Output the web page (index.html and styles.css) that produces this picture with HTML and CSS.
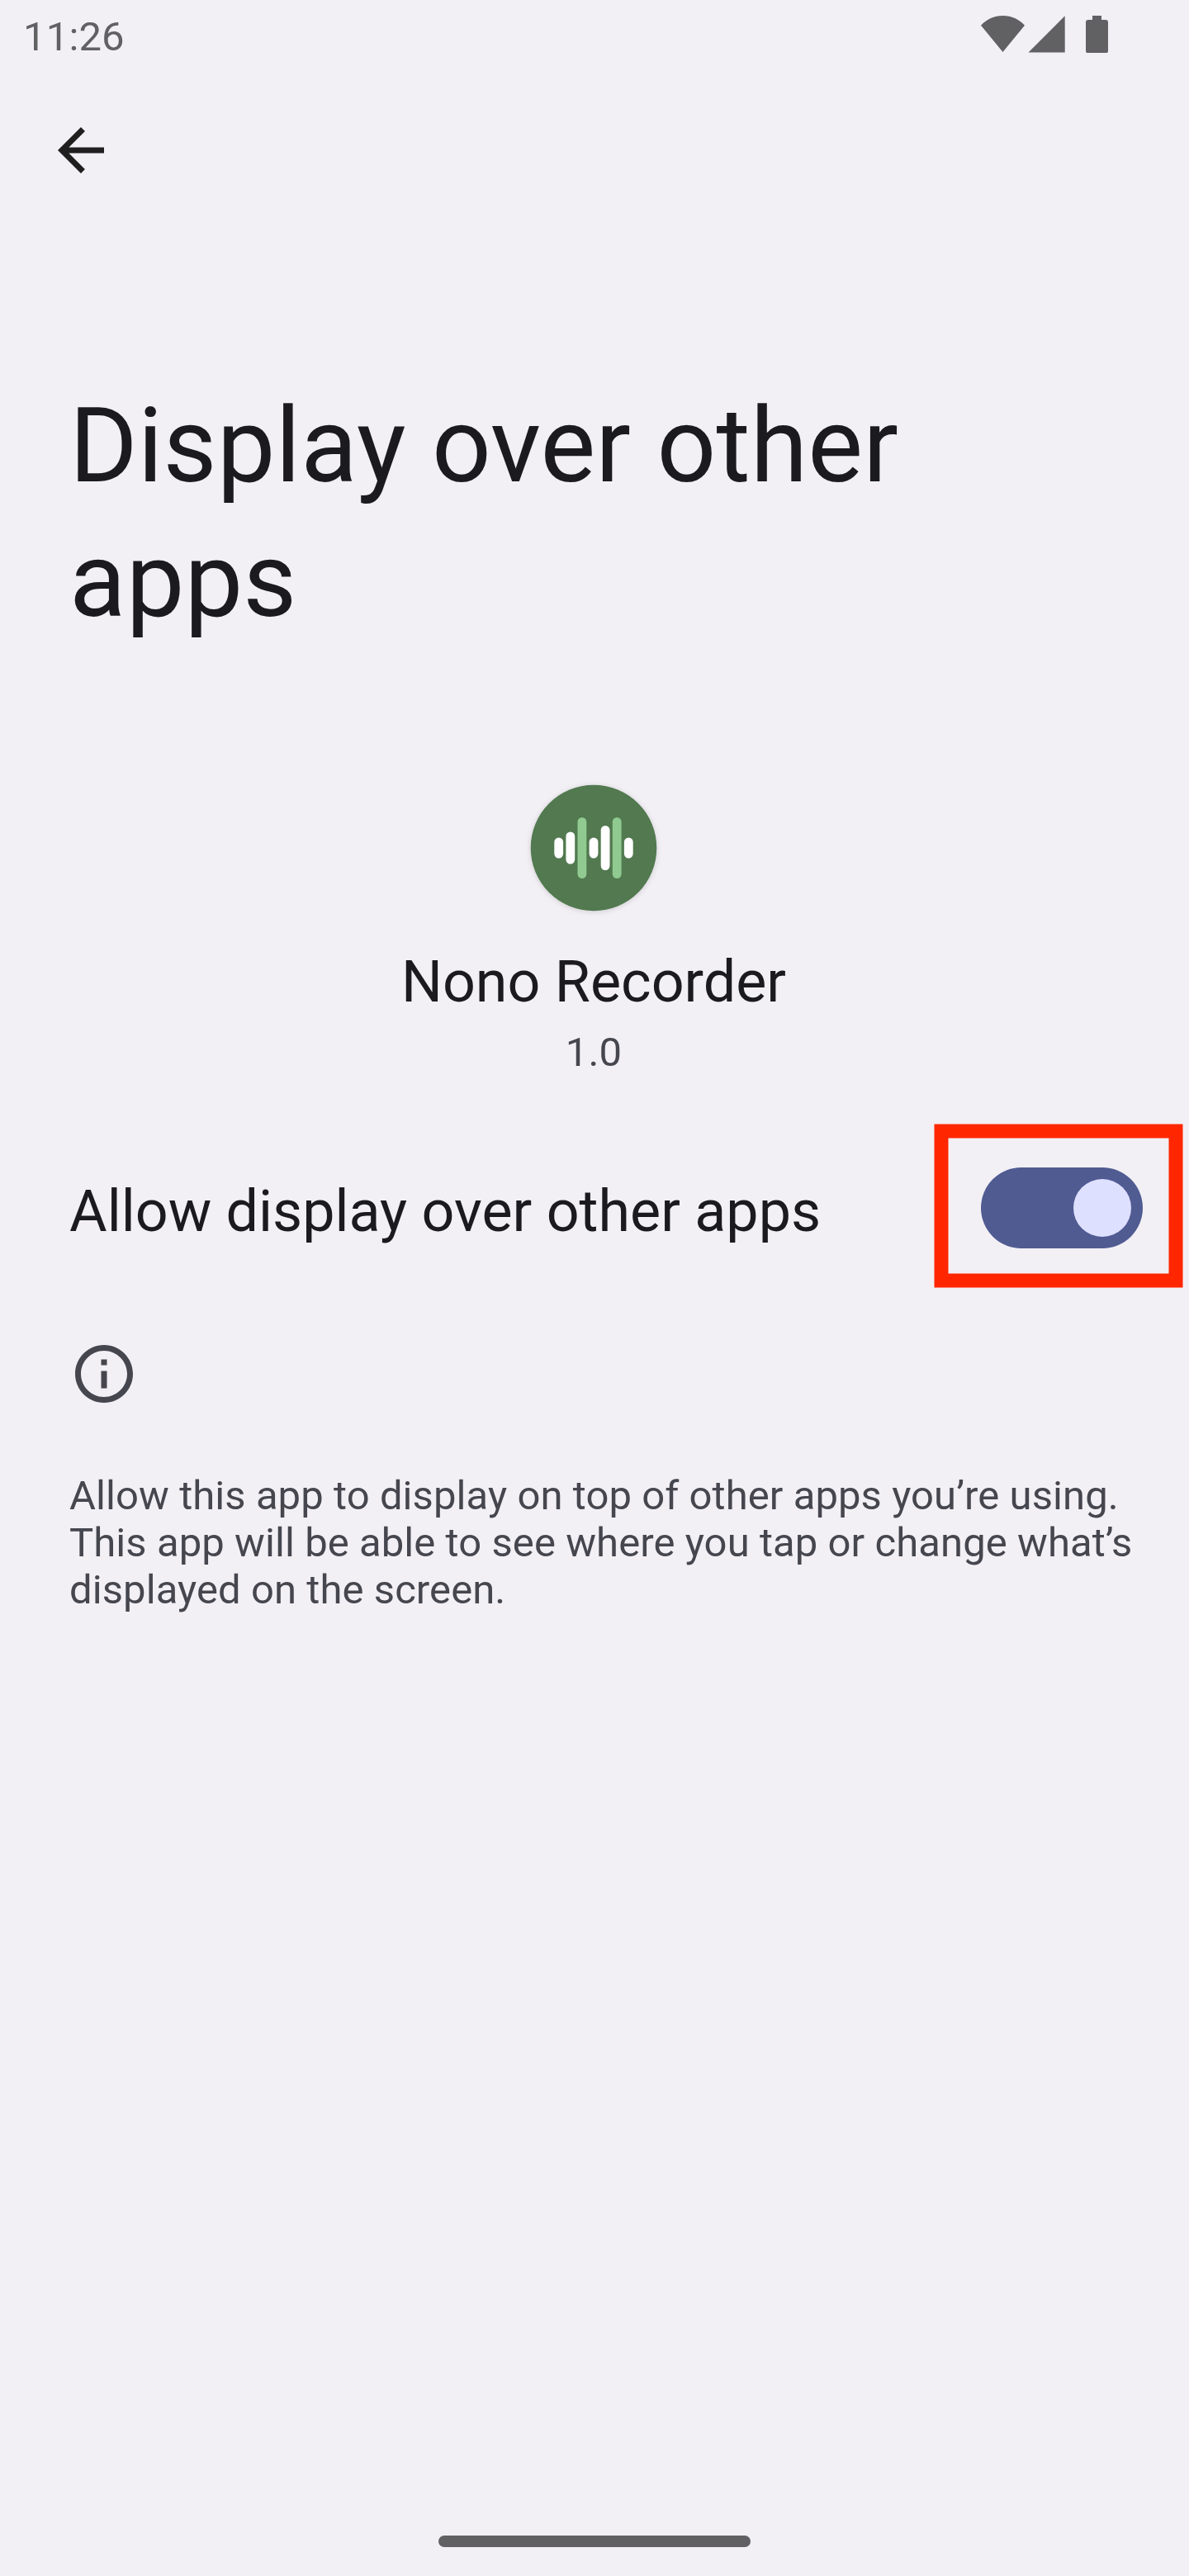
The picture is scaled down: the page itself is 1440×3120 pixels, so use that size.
FILE: index.html
```html
<!DOCTYPE html>
<html lang="en">
<head>
<meta charset="utf-8">
<title>Display over other apps</title>
<link rel="stylesheet" href="styles.css">
</head>
<body>
<div class="screen">
  <header class="status-bar">
    <span class="clock">11:26</span>
    <svg class="status-icons" viewBox="0 0 154 46" width="154" height="46" aria-hidden="true">
      <path d="M0 12.8C7 5 16 1 26.500 1S46 5 53 12.800L26.500 45Z"/>
      <path d="M57.500 45.500H101.700V1.300Z"/>
      <path d="M135 1h11v5h5a3 3 0 0 1 3 3v34.500a3 3 0 0 1-3 3h-21a3 3 0 0 1-3-3V9a3 3 0 0 1 3-3h5z"/>
    </svg>
  </header>
  <nav class="toolbar">
    <svg class="back" viewBox="0 0 24 24" width="84" height="84" aria-hidden="true"><path d="M20 11H7.830l5.590-5.590L12 4l-8 8 8 8 1.410-1.410L7.830 13H20z"/></svg>
  </nav>
  <h1 class="title">Display over other apps</h1>
  <section class="app">
    <svg class="app-icon" viewBox="0 0 154 154" width="154" height="154" aria-hidden="true">
      <circle cx="77" cy="77" r="76.300" fill="#52794f"/>
      <g fill="#fff">
        <rect x="29.300" y="64.500" width="10.800" height="25" rx="5.400"/>
        <rect x="43.400" y="57.500" width="10.800" height="39" rx="5.400"/>
        <rect x="71.600" y="64.500" width="10.800" height="25" rx="5.400"/>
        <rect x="85.700" y="50" width="10.800" height="54" rx="5.400"/>
        <rect x="113.900" y="64.500" width="10.800" height="25" rx="5.400"/>
      </g>
      <g fill="#90ca90">
        <rect x="57.500" y="40" width="10.800" height="74" rx="5.400"/>
        <rect x="99.800" y="40" width="10.800" height="74" rx="5.400"/>
      </g>
    </svg>
    <div class="app-name">Nono Recorder</div>
    <div class="app-version">1.0</div>
  </section>
  <section class="setting">
    <span class="setting-label">Allow display over other apps</span>
    <span class="switch"><span class="thumb"></span></span>
    <svg class="highlight" viewBox="0 0 302 199" width="302" height="199" aria-hidden="true"><rect x="9" y="9" width="284" height="181"/></svg>
  </section>
  <section class="info">
    <svg class="info-icon" viewBox="0 0 24 24" width="84" height="84" aria-hidden="true"><path d="M11 7h2v2h-2zM11 11h2v6h-2zM12 2C6.480 2 2 6.480 2 12s4.480 10 10 10 10-4.480 10-10S17.520 2 12 2zm0 18c-4.410 0-8-3.590-8-8s3.590-8 8-8 8 3.590 8 8-3.590 8-8 8z"/></svg>
    <p class="info-text">Allow this app to display on top of other apps you’re using. This app will be able to see where you tap or change what’s displayed on the screen.</p>
  </section>
  <div class="home-bar"></div>
</div>
</body>
</html>
```
FILE: styles.css
```css
body { margin: 0; }
.screen {
  box-sizing: border-box;
  display: flex;
  flex-direction: column;
  width: 1440px;
  height: 3120px;
  padding-bottom: 35px;
  background: #f2f0f5;
  color: #1b1b1f;
  font-family: Roboto, sans-serif;
  overflow: hidden;
}
.status-bar {
  display: flex;
  justify-content: space-between;
  align-items: flex-start;
  height: 122px;
  padding: 18px 98px 0 28px;
  color: #616163;
}
.clock { font-size: 49px; line-height: 53px; letter-spacing: .15px; }
.status-icons { fill: #616163; }
.toolbar { height: 84px; padding-left: 56px; }
.back { display: block; fill: #1f1f1f; }
.title {
  width: 1100px;
  margin: 235px 0 0 84px;
  font-size: 126px;
  line-height: 163px;
  font-weight: 400;
  letter-spacing: .1px;
}
.app {
  display: flex;
  flex-direction: column;
  align-items: center;
  margin-top: 165px;
  padding-right: 2px;
}
.app-icon { filter: drop-shadow(0 1px 3px rgba(0, 0, 0, .15)); }
.app-name { margin-top: 44px; font-size: 70px; line-height: 82px; }
.app-version { margin-top: 16px; color: #46464f; font-size: 49px; line-height: 57px; letter-spacing: .1px; }
.setting {
  position: relative;
  display: flex;
  justify-content: space-between;
  align-items: center;
  height: 98px;
  margin-top: 111px;
  padding: 0 56px 0 84px;
}
.setting-label { padding-top: 8px; font-size: 70px; line-height: 82px; }
.switch {
  box-sizing: border-box;
  display: flex;
  justify-content: flex-end;
  width: 196px;
  height: 98px;
  padding: 14px;
  border-radius: 49px;
  background: #505b92;
}
.thumb { width: 70px; height: 70px; border-radius: 50%; background: #dee0ff; }
.highlight { position: absolute; left: 1131px; top: -53px; fill: none; stroke: #ff2600; stroke-width: 17px; }
.info { margin-top: 110px; padding: 0 56px 0 84px; }
.info-icon { display: block; fill: #46464f; }
.info-text { margin: 77px 0 0; color: #46464f; font-size: 49px; line-height: 57px; letter-spacing: .073px; }
.home-bar { width: 378px; height: 14px; margin: auto auto 0; border-radius: 7px; background: #616163; }
```
